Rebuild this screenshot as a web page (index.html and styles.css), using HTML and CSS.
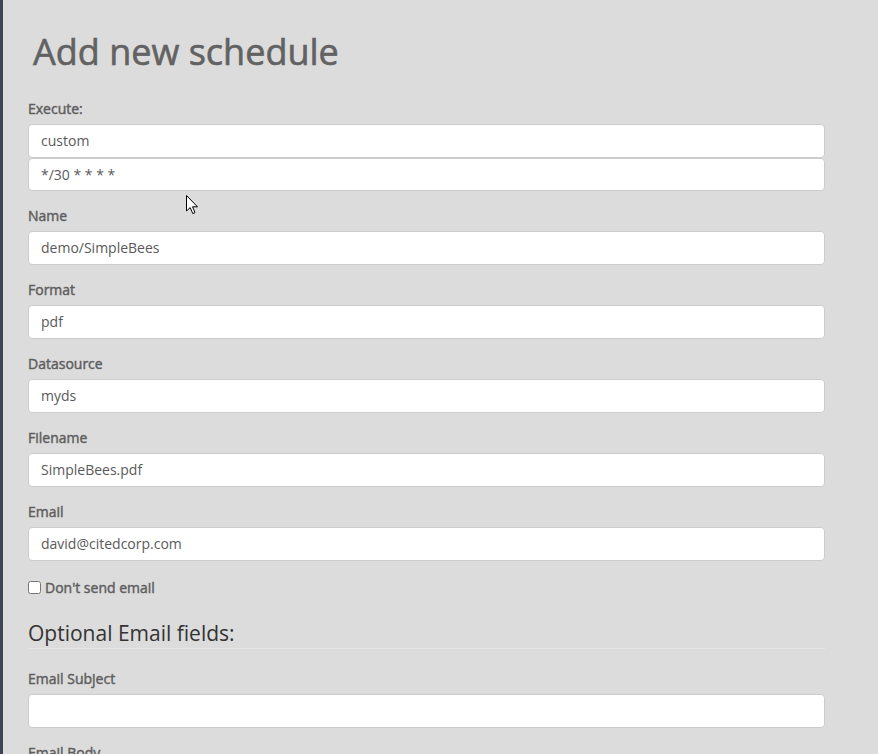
FILE: index.html
```html
<!DOCTYPE html>
<html lang="en">
<head>
<meta charset="utf-8">
<title>Add new schedule</title>
<link rel="stylesheet" href="styles.css">
</head>
<body>
<div class="layout">
  <div class="sidebar"></div>
  <main class="content">
    <h1 class="title">Add new schedule</h1>
    <form class="form">
      <div class="group">
        <label class="label">Execute:</label>
        <input class="input input-top" type="text" value="custom">
        <input class="input input-bottom" type="text" value="*/30 * * * *">
      </div>
      <div class="group">
        <label class="label">Name</label>
        <input class="input" type="text" value="demo/SimpleBees">
      </div>
      <div class="group">
        <label class="label">Format</label>
        <input class="input" type="text" value="pdf">
      </div>
      <div class="group">
        <label class="label">Datasource</label>
        <input class="input" type="text" value="myds">
      </div>
      <div class="group">
        <label class="label">Filename</label>
        <input class="input" type="text" value="SimpleBees.pdf">
      </div>
      <div class="group">
        <label class="label">Email</label>
        <input class="input" type="text" value="david@citedcorp.com">
      </div>
      <div class="checkbox">
        <label class="check-label"><input type="checkbox" class="check"> Don't send email</label>
      </div>
      <fieldset class="fieldset">
        <legend class="legend">Optional Email fields:</legend>
        <div class="group">
          <label class="label">Email Subject</label>
          <input class="input" type="text" value="">
        </div>
        <div class="group">
          <label class="label">Email Body</label>
          <textarea class="input textarea"></textarea>
        </div>
      </fieldset>
    </form>
  </main>
</div>
<svg class="cursor" width="14" height="22" viewBox="0 0 14 22" aria-hidden="true">
  <path d="M0.5 0.5 L0.5 16 L4.2 12.6 L6.8 18.6 L9 17.6 L6.5 11.8 L11.5 11.8 Z" fill="#ffffff" stroke="#000000" stroke-width="1" stroke-linejoin="miter"/>
</svg>
</body>
</html>
```
FILE: styles.css
```css
html, body {
  margin: 0;
  padding: 0;
  height: 100%;
  overflow: hidden;
}
body {
  background: #dcdcdc;
  font-family: "Open Sans", "Liberation Sans", sans-serif;
  color: #5e5e5e;
  position: relative;
}
.layout {
  display: flex;
  min-height: 100%;
}
.sidebar {
  width: 3px;
  flex: none;
  background: #3a4654;
}
.content {
  padding-left: 25px;
  width: 797px;
}
.title {
  margin: 32px 0 27px 5px;
  font-size: 36px;
  line-height: 1.1;
  font-weight: 400;
  color: #626262;
  -webkit-text-stroke: 0.6px #626262;
}
.form {
  margin: 0;
}
.group {
  margin-bottom: 15px;
}
.label {
  display: block;
  font-size: 14px;
  line-height: 20px;
  font-weight: 400;
  -webkit-text-stroke: 0.45px #5e5e5e;
  color: #5e5e5e;
  margin-bottom: 5px;
}
.input {
  display: block;
  box-sizing: border-box;
  width: 100%;
  height: 34px;
  padding: 6px 12px;
  margin: 0;
  font-family: "Open Sans", "Liberation Sans", sans-serif;
  font-size: 14px;
  line-height: 20px;
  color: #5a5a5a;
  background: #ffffff;
  border: 1px solid #cccccc;
  border-radius: 4px;
  outline: none;
}
.input-bottom {
  height: 33px;
}
.textarea {
  height: 60px;
  resize: none;
}
.checkbox {
  margin: 0 0 20px;
  padding-top: 2px;
}
.check-label {
  display: flex;
  align-items: center;
  font-size: 14px;
  line-height: 20px;
  font-weight: 400;
  -webkit-text-stroke: 0.45px #5e5e5e;
  color: #5e5e5e;
}
.check {
  width: 13px;
  height: 13px;
  margin: 0 4px 0 0;
}
.fieldset {
  border: 0;
  margin: 0;
  padding: 0;
  min-width: 0;
}
.legend {
  display: block;
  box-sizing: border-box;
  width: 100%;
  padding: 0;
  margin-bottom: 20px;
  font-size: 21px;
  line-height: 30px;
  color: #333333;
  border-bottom: 1px solid #e5e5e5;
}
.cursor {
  position: absolute;
  left: 186px;
  top: 195px;
}
```
